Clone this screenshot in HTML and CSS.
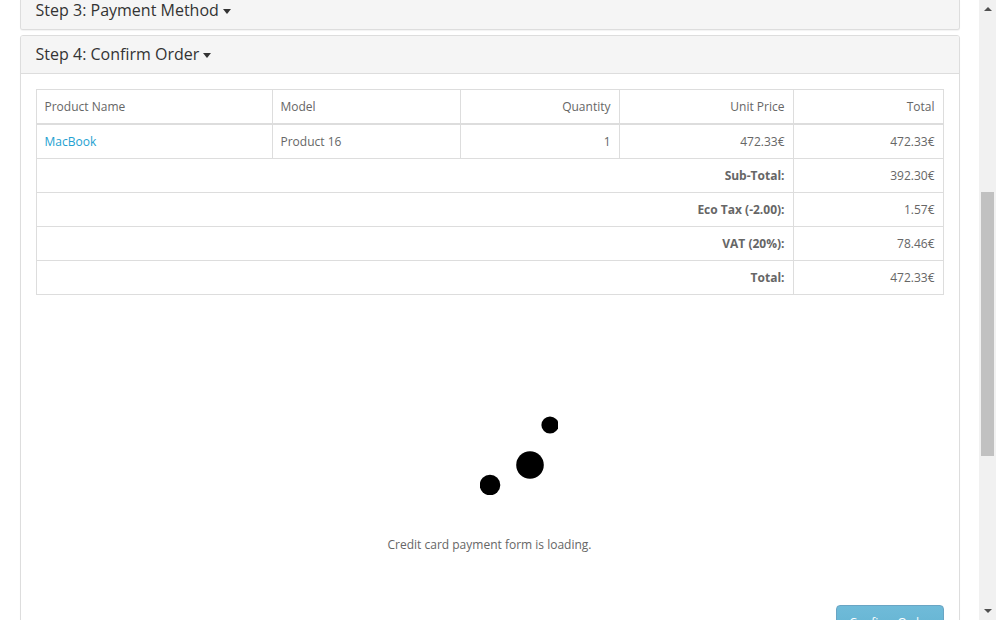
FILE: index.html
```html
<!DOCTYPE html>
<html lang="en">
<head>
<meta charset="utf-8">
<title>Checkout</title>
<link rel="stylesheet" href="styles.css">
</head>
<body>
<main class="checkout">
  <section class="panel previous"><h4 class="heading">Step 3: Payment Method <i class="caret"></i></h4></section>
  <section class="panel current">
    <h4 class="heading">Step 4: Confirm Order <i class="caret"></i></h4>
    <div class="panel-body">
      <table class="order">
        <colgroup><col class="c-name"><col class="c-model"><col class="c-qty"><col class="c-price"><col class="c-total"></colgroup>
        <thead><tr><td>Product Name</td><td>Model</td><td class="right">Quantity</td><td class="right">Unit Price</td><td class="right">Total</td></tr></thead>
        <tbody><tr><td><a>MacBook</a></td><td>Product 16</td><td class="right">1</td><td class="right">472.33€</td><td class="right">472.33€</td></tr></tbody>
        <tfoot>
          <tr><td colspan="4" class="right"><strong>Sub-Total:</strong></td><td class="right">392.30€</td></tr>
          <tr><td colspan="4" class="right"><strong>Eco Tax (-2.00):</strong></td><td class="right">1.57€</td></tr>
          <tr><td colspan="4" class="right"><strong>VAT (20%):</strong></td><td class="right">78.46€</td></tr>
          <tr><td colspan="4" class="right"><strong>Total:</strong></td><td class="right">472.33€</td></tr>
        </tfoot>
      </table>
      <div class="loading">
        <svg class="spinner" width="78" height="90" viewBox="0 0 78 90"><circle cx="70" cy="20" r="8.6"/><circle cx="50" cy="60" r="13.8"/><circle cx="10" cy="80" r="10.3"/></svg>
        <p>Credit card payment form is loading.</p>
      </div>
      <div class="buttons"><button class="confirm">Confirm Order</button></div>
    </div>
  </section>
</main>
<aside class="scrollbar"><i class="arrow up"></i><div class="track"><div class="thumb"></div></div><i class="arrow down"></i></aside>
</body>
</html>
```
FILE: styles.css
```css
* { box-sizing: border-box; }
body { margin: 0; height: 620px; overflow: hidden; display: flex; background: #fff; color: #666; font: 12px/20px "Open Sans", sans-serif; }
.checkout { width: 979px; height: 620px; overflow: hidden; padding: 0 19px 0 20px; }
.panel { border: 1px solid #ddd; border-radius: 3px; background: #fff; box-shadow: 0 1px 1px rgba(0, 0, 0, .05); overflow: hidden; }
.previous { height: 30px; border-top: 0; border-radius: 0 0 3px 3px; background: #f5f5f5; }
.previous .heading { margin-top: -8px; border-bottom: 0; }
.current { margin-top: 5px; }
.heading { margin: 0; height: 38px; padding: 10px 14.6px; border-bottom: 1px solid #ddd; background: #f5f5f5; color: #333; font-size: 16px; font-weight: 400; line-height: 17px; }
.caret { display: inline-block; margin-bottom: 1px; border: 4px solid transparent; border-top: 5px solid #333; border-bottom: 0; vertical-align: middle; }
.panel-body { padding: 15px; }
.order { width: 908px; table-layout: fixed; border-collapse: collapse; }
.c-name { width: 236px; }
.c-model { width: 188px; }
.c-qty { width: 159px; }
.c-price { width: 174px; }
.c-total { width: 150px; }
.order td { height: 34px; padding: 7px 8.5px 6px 7.5px; border: 1px solid #ddd; }
.order thead td { border-bottom-width: 2px; }
.order a { color: #23a1d1; }
.order .right { text-align: right; }
.loading { padding-top: 110px; text-align: center; }
.spinner { display: block; margin: 0 0 0 444px; }
.loading p { margin: 40px 1px 50px 0; }
.buttons { display: flex; justify-content: flex-end; }
.confirm { width: 108px; height: 36px; border: 1px solid #6aa5c4; border-radius: 4px; background: linear-gradient(#70bbd9, #60b2d0); color: #fff; font: 12px/18px "Open Sans", sans-serif; }
.scrollbar { width: 17px; height: 620px; display: flex; flex-direction: column; align-items: center; justify-content: space-between; padding: 7px 0; background: #f1f1f1; }
.track { width: 13px; height: 586px; padding-top: 175px; }
.thumb { height: 264px; background: #c1c1c1; }
.arrow { border: 4px solid transparent; }
.up { border-top: 0; border-bottom-color: #505050; }
.down { border-bottom: 0; border-top-color: #505050; }
```
